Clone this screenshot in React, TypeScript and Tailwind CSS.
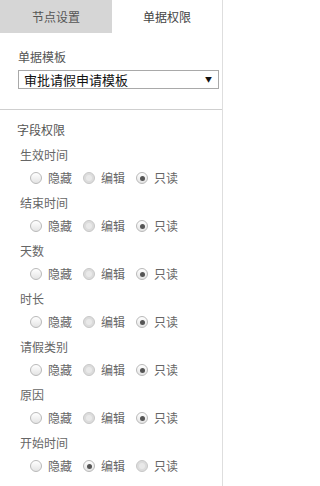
import React from "react";

type Mode = "hide" | "edit" | "read";

const fields: { name: string; value: Mode; editDisabled: boolean }[] = [
  { name: "生效时间", value: "read", editDisabled: true },
  { name: "结束时间", value: "read", editDisabled: true },
  { name: "天数", value: "read", editDisabled: true },
  { name: "时长", value: "read", editDisabled: true },
  { name: "请假类别", value: "read", editDisabled: true },
  { name: "原因", value: "read", editDisabled: true },
  { name: "开始时间", value: "edit", editDisabled: false },
];

function Radio({ checked, disabled }: { checked: boolean; disabled?: boolean }) {
  return (
    <span
      className={
        "flex h-[12px] w-[12px] items-center justify-center rounded-full border " +
        (disabled
          ? "border-[#c8c8c8] bg-[#dcdcdc]"
          : "border-[#b9b9b9] bg-gradient-to-b from-[#ffffff] to-[#e4e4e4]")
      }
    >
      {checked && <span className="h-[5px] w-[5px] rounded-full bg-[#555]" />}
      {disabled && !checked && <span className="h-[6px] w-[6px] rounded-full bg-[#e9e9e9]" />}
    </span>
  );
}

function Option({ label, checked, disabled }: { label: string; checked: boolean; disabled?: boolean }) {
  return (
    <label className="flex items-center gap-[6px]">
      <Radio checked={checked} disabled={disabled} />
      <span className="text-[12px] leading-[14px] text-[#666]">{label}</span>
    </label>
  );
}

export default function App() {
  return (
    <div
      className="h-[486px] w-[226px] overflow-hidden bg-white"
      style={{ fontFamily: '"Noto Sans CJK SC", "Noto Sans", sans-serif' }}
    >
      <div className="h-full w-[223px] border-r border-[#dedede]">
        <div className="flex h-[33px]">
          <div className="flex w-[112px] items-center justify-center bg-[#d6d6d6] text-[12px] text-[#555]">
            节点设置
          </div>
          <div className="flex flex-1 items-center justify-center text-[12px] text-[#444]">
            单据权限
          </div>
        </div>

        <div className="border-b border-[#cfcfcf] pb-[20px] pl-[18px] pr-[3px] pt-[16px]">
          <div className="text-[12px] leading-[16px] text-[#555]">单据模板</div>
          <div className="mt-[5px] flex h-[19px] items-center justify-between border border-[#a9a9a9] pl-[5px] pr-[6px]">
            <span className="text-[13px] leading-[15px] text-[#111]">审批请假申请模板</span>
            <span className="text-[7px] leading-none text-[#111]">▼</span>
          </div>
        </div>

        <div className="pl-[17px] pt-[12px]">
          <div className="text-[12px] leading-[16px] text-[#555]">字段权限</div>
          <div className="mt-[4px] flex flex-col">
            {fields.map((f) => (
              <div key={f.name} className="flex h-[48px] flex-col">
                <div className="pl-[3px] pt-[5px] text-[12px] leading-[16px] text-[#666]">{f.name}</div>
                <div className="mt-[8px] flex items-center gap-[11px] pl-[13px]">
                  <Option label="隐藏" checked={f.value === "hide"} />
                  <Option label="编辑" checked={f.value === "edit"} disabled={f.editDisabled} />
                  <Option label="只读" checked={f.value === "read"} disabled={!f.editDisabled} />
                </div>
              </div>
            ))}
          </div>
        </div>
      </div>
    </div>
  );
}
